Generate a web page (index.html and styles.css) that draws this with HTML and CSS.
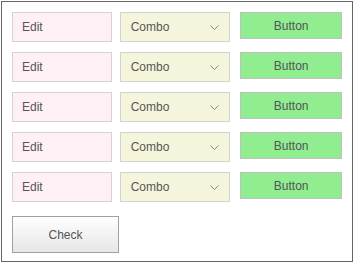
FILE: index.html
```html
<!DOCTYPE html>
<html lang="en">
<head>
    <meta charset="UTF-8">
    <title>Form</title>
    <link rel="stylesheet" href="styles.css">
</head>
<body>
    <div class="frame">
        <div class="rows">
            <div class="row">
                <div class="edit">Edit</div>
                <div class="combo"><span>Combo</span><svg class="chev" width="9" height="5" viewBox="0 0 9 5"><path d="M0.5 0.5 L4.5 4.5 L8.5 0.5" fill="none" stroke="#8a8a8a" stroke-width="1"/></svg></div>
                <div class="btn">Button</div>
            </div>
            <div class="row">
                <div class="edit">Edit</div>
                <div class="combo"><span>Combo</span><svg class="chev" width="9" height="5" viewBox="0 0 9 5"><path d="M0.5 0.5 L4.5 4.5 L8.5 0.5" fill="none" stroke="#8a8a8a" stroke-width="1"/></svg></div>
                <div class="btn">Button</div>
            </div>
            <div class="row">
                <div class="edit">Edit</div>
                <div class="combo"><span>Combo</span><svg class="chev" width="9" height="5" viewBox="0 0 9 5"><path d="M0.5 0.5 L4.5 4.5 L8.5 0.5" fill="none" stroke="#8a8a8a" stroke-width="1"/></svg></div>
                <div class="btn">Button</div>
            </div>
            <div class="row">
                <div class="edit">Edit</div>
                <div class="combo"><span>Combo</span><svg class="chev" width="9" height="5" viewBox="0 0 9 5"><path d="M0.5 0.5 L4.5 4.5 L8.5 0.5" fill="none" stroke="#8a8a8a" stroke-width="1"/></svg></div>
                <div class="btn">Button</div>
            </div>
            <div class="row">
                <div class="edit">Edit</div>
                <div class="combo"><span>Combo</span><svg class="chev" width="9" height="5" viewBox="0 0 9 5"><path d="M0.5 0.5 L4.5 4.5 L8.5 0.5" fill="none" stroke="#8a8a8a" stroke-width="1"/></svg></div>
                <div class="btn">Button</div>
            </div>
        </div>
        <div class="check">Check</div>
    </div>
</body>
</html>
```

FILE: styles.css
```css
* {
    margin: 0;
    padding: 0;
    box-sizing: border-box;
}

body {
    font-family: 'Liberation Sans', Arial, sans-serif;
    font-size: 12px;
    color: #555;
    background: white;
}

.frame {
    margin: 1px;
    width: 352px;
    height: 261px;
    border: 1px solid #666;
    padding: 10px;
}

.rows {
    display: flex;
    flex-direction: column;
    gap: 10px;
}

.row {
    display: flex;
    align-items: flex-start;
    height: 30px;
}

.edit {
    width: 100px;
    height: 30px;
    background: #fff0f5;
    border: 1px solid #d3d3d3;
    padding-left: 9px;
    display: flex;
    align-items: center;
}

.combo {
    width: 111px;
    height: 30px;
    margin-left: 8px;
    background: #f5f5dc;
    border: 1px solid #d3d3d3;
    padding: 0 10px 0 10px;
    display: flex;
    align-items: center;
    justify-content: space-between;
}

.chev {
    display: block;
}

.btn {
    width: 102px;
    height: 27px;
    margin-left: 10px;
    background: #90ee90;
    border: 1px solid #c0c0c0;
    display: flex;
    align-items: center;
    justify-content: center;
}

.check {
    margin-top: 14px;
    width: 107px;
    height: 37px;
    border: 1px solid #a0a0a0;
    background: linear-gradient(#ffffff, #e6e6e6);
    display: flex;
    align-items: center;
    justify-content: center;
}
```
